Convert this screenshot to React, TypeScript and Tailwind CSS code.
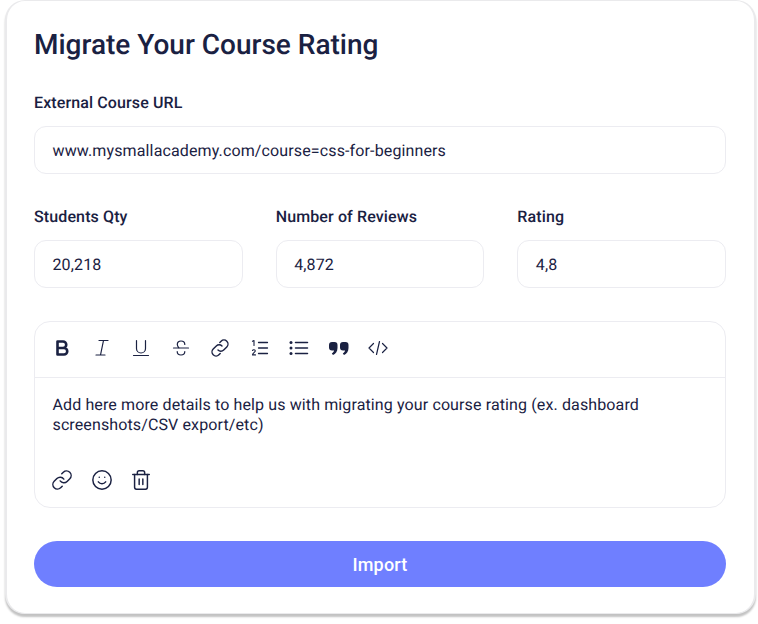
import { Link, Smile, Trash2 } from "lucide-react";

const toolbarStroke = {
  fill: "none",
  stroke: "#1a2142",
  strokeWidth: 1.5,
  strokeLinecap: "round" as const,
  strokeLinejoin: "round" as const,
};

function ToolIcon({ children }: { children: React.ReactNode }) {
  return (
    <svg width="22" height="22" viewBox="0 0 22 22" {...toolbarStroke}>
      {children}
    </svg>
  );
}

function Field({ label, value, className }: { label: string; value: string; className?: string }) {
  return (
    <div className={className}>
      <label className="block text-[16px] leading-[22px] font-medium tracking-[0.12px] text-[#1a2142]">{label}</label>
      <div className="mt-[12px] flex h-[48px] items-center rounded-[12px] border border-[#ececf1] bg-white px-[17.5px] pt-[2px] text-[16px] tracking-[0.13px] text-[#1a2142]">
        {value}
      </div>
    </div>
  );
}

export default function App() {
  return (
    <div className="h-[624px] w-[758px] overflow-hidden bg-white font-['Roboto',sans-serif] [text-rendering:geometricPrecision]">
      <div className="ml-[5px] h-[614px] w-[751px] rounded-[20px] border-x-2 border-t border-b border-[#eaeaec] bg-white pt-[27px] pr-[28px] pl-[27px] shadow-[0_3px_2px_rgba(0,0,0,0.24)]">
        <h1 className="text-[28px] leading-[34px] font-medium text-[#1a2142]">Migrate Your Course Rating</h1>

        <Field label="External Course URL" value="www.mysmallacademy.com/course=css-for-beginners" className="mt-[30px]" />

        <div className="mt-[32px] grid grid-cols-3 gap-[33px]">
          <Field label="Students Qty" value="20,218" />
          <Field label="Number of Reviews" value="4,872" />
          <Field label="Rating" value="4,8" />
        </div>

        <div className="mt-[33px] h-[187px] rounded-[16px] border border-[#ececf1]">
          <div className="flex h-[56px] items-center gap-[17.5px] border-b border-[#ececf1] pb-[3px] pl-[16px]">
            <ToolIcon>
              <path d="M6.500 4.500h5.500a3.200 3.200 0 0 1 0 6.500H6.500zM6.500 11h6.500a3.200 3.200 0 0 1 0 6.500H6.500z" strokeWidth={2.6} />
            </ToolIcon>
            <ToolIcon>
              <path d="M8 3.500h9M5 18h9M12.500 3.500 9.500 18" strokeWidth={1.2} />
            </ToolIcon>
            <ToolIcon>
              <path d="M6.500 3.500v8a4.500 4.500 0 0 0 9 0v-8M3.500 18.500h15" strokeWidth={1.2} />
            </ToolIcon>
            <ToolIcon>
              <path d="M3.500 11h15M14.800 7.500C14.800 5.300 13 4 11 4S7.300 5.300 7.300 7.500c0 1.200.6 2.200 1.700 3.500M14.800 14.500c0 2.300-1.600 3.500-3.800 3.500s-3.800-1.300-3.800-3.500" strokeWidth={1.2} />
            </ToolIcon>
            <ToolIcon>
              <path d="M9 13a4 4 0 0 0 5.700 0l3.100-3.100a4 4 0 0 0-5.700-5.700l-1.300 1.300M13 9a4 4 0 0 0-5.700 0l-3.100 3.100a4 4 0 0 0 5.700 5.700l1.300-1.300" strokeWidth={1.4} />
            </ToolIcon>
            <ToolIcon>
              <path d="M9.500 5.500h9M9.500 11h9M9.500 16.500h9" strokeWidth={1.3} />
              <path d="M3.500 4.300 5 3.500v5M3.500 13.500c.4-1.100 2.800-1.100 2.800.4 0 1-2.700 2.200-2.800 4h3" strokeWidth={1.1} />
            </ToolIcon>
            <ToolIcon>
              <path d="M7.500 5.500h12M7.500 11h12M7.500 16.500h12" />
              <circle cx="3" cy="5.500" r="1.500" fill="#1a2142" stroke="none" />
              <circle cx="3" cy="11" r="1.500" fill="#1a2142" stroke="none" />
              <circle cx="3" cy="16.500" r="1.500" fill="#1a2142" stroke="none" />
            </ToolIcon>
            <ToolIcon>
              <path
                d="M1 8a3 3 0 0 1 3-3h2.500a3 3 0 0 1 3 3v3c0 3.500-2 6-4.500 7l-1.200-1.500c1.400-.9 2.100-2 2.300-3H4a3 3 0 0 1-3-3zM12 8a3 3 0 0 1 3-3h2.500a3 3 0 0 1 3 3v3c0 3.500-2 6-4.500 7l-1.200-1.500c1.400-.9 2.100-2 2.300-3H15a3 3 0 0 1-3-3z"
                fill="#1a2142"
                stroke="none"
              />
            </ToolIcon>
            <ToolIcon>
              <path d="M6.500 6.500 2 11l4.500 4.500M15.500 6.500 20 11l-4.500 4.500M12.500 4.500l-3 13" strokeWidth={1.2} />
            </ToolIcon>
          </div>

          <p className="pt-[17px] pr-[17px] pl-[17.5px] text-[16px] leading-[20px] tracking-[0.12px] text-[#1a2142]">
            Add here more details to help us with migrating your course rating (ex. dashboard screenshots/CSV export/etc)
          </p>

          <div className="mt-[34px] flex items-center gap-[17.5px] pl-[16px] text-[#1a2142]">
            <Link size={22} strokeWidth={1.6} />
            <Smile size={22} strokeWidth={1.6} />
            <Trash2 size={22} strokeWidth={1.6} />
          </div>
        </div>

        <button className="mt-[33px] h-[46px] w-full rounded-[24px] bg-[#6f7fff] text-[18px] font-medium tracking-[0.2px] text-white">
          Import
        </button>
      </div>
    </div>
  );
}
